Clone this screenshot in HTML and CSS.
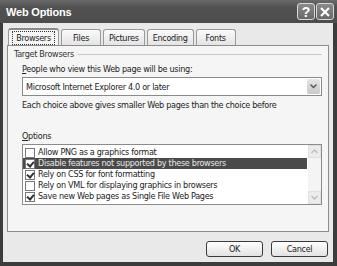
FILE: index.html
```html
<!DOCTYPE html>
<html>
<head>
    <title>Web Options</title>
    <link rel="stylesheet" href="styles.css">
</head>
<body>
    <div class="window">
        <div class="titlebar">
            <span class="title">Web Options</span>
            <div class="title-buttons">
                <span class="tbtn">?</span>
                <span class="tbtn">
                    <svg width="12" height="12" viewBox="0 0 12 12"><path d="M2 2 L10 10 M10 2 L2 10" stroke="#fff" stroke-width="2.2"/></svg>
                </span>
            </div>
        </div>

        <div class="content">
            <div class="tabs">
                <div class="tab active"><span class="focus">Browsers</span></div>
                <div class="tab">Files</div>
                <div class="tab">Pictures</div>
                <div class="tab">Encoding</div>
                <div class="tab">Fonts</div>
            </div>

            <div class="panel">
                <div class="group-title"><span>Target Browsers</span></div>
                <div class="indent">
                    <p class="label"><u>P</u>eople who view this Web page will be using:</p>
                    <div class="select">
                        <span class="select-text">Microsoft Internet Explorer 4.0 or later</span>
                        <span class="select-btn">
                            <svg width="7" height="5" viewBox="0 0 7 5"><path d="M0.5 0.5 L3.5 3.5 L6.5 0.5" fill="none" stroke="#555" stroke-width="1.4"/></svg>
                        </span>
                    </div>
                    <p class="hint">Each choice above gives smaller Web pages than the choice before</p>
                    <p class="label options-label"><u>O</u>ptions</p>
                    <div class="listbox">
                        <div class="items">
                            <div class="item"><span class="check"></span>Allow PNG as a graphics format</div>
                            <div class="item selected"><span class="check on"></span>Disable features not supported by these browsers</div>
                            <div class="item"><span class="check on"></span>Rely on CSS for font formatting</div>
                            <div class="item"><span class="check"></span>Rely on VML for displaying graphics in browsers</div>
                            <div class="item"><span class="check on"></span>Save new Web pages as Single File Web Pages</div>
                        </div>
                        <div class="scrollbar">
                            <span class="sbtn">
                                <svg width="7" height="5" viewBox="0 0 7 5"><path d="M0.5 4 L3.5 1 L6.5 4" fill="none" stroke="#bbb" stroke-width="1.3"/></svg>
                            </span>
                            <span class="sbtn">
                                <svg width="7" height="5" viewBox="0 0 7 5"><path d="M0.5 1 L3.5 4 L6.5 1" fill="none" stroke="#bbb" stroke-width="1.3"/></svg>
                            </span>
                        </div>
                    </div>
                </div>
            </div>

            <div class="buttons">
                <button>OK</button>
                <button>Cancel</button>
            </div>
        </div>
    </div>
</body>
</html>
```

FILE: styles.css
```css
* {
    margin: 0;
    padding: 0;
    box-sizing: border-box;
}

body {
    width: 337px;
    height: 266px;
    background: #2e2e2e;
    font-family: 'DejaVu Sans Condensed', 'Liberation Sans', sans-serif;
    font-size: 9px;
    letter-spacing: -0.3px;
    color: #222;
    overflow: hidden;
}

.window {
    width: 337px;
    height: 266px;
    background: #3c3c3c;
    padding: 0 4px 4px 3px;
    display: flex;
    flex-direction: column;
}

.titlebar {
    height: 23px;
    display: flex;
    align-items: center;
    justify-content: space-between;
    background: linear-gradient(#6a6a6a 0%, #525252 30%, #4c4c4c 100%);
    margin: 0 -4px 0 -3px;
    padding: 0 3px 0 6px;
}

.title {
    color: #fff;
    font-family: 'Liberation Sans', Arial, sans-serif;
    font-weight: bold;
    font-size: 11px;
    letter-spacing: -0.2px;
}

.title-buttons {
    display: flex;
    gap: 1px;
}

.tbtn {
    width: 18px;
    height: 17px;
    border: 1px solid #d8d8d8;
    border-radius: 3px;
    background: linear-gradient(#8a8a8a, #686868);
    color: #fff;
    font-family: 'Liberation Sans', Arial, sans-serif;
    font-weight: bold;
    font-size: 14px;
    display: flex;
    align-items: center;
    justify-content: center;
}

.content {
    flex: 1;
    background: #e9e9e9;
    padding: 4px 4px 0 4px;
    display: flex;
    flex-direction: column;
}

.tabs {
    display: flex;
    gap: 2px;
    padding-left: 1px;
    height: 18px;
    align-items: flex-end;
}

.tab {
    height: 16px;
    min-width: 40px;
    padding: 0 5px;
    border: 1px solid #9a9a9a;
    border-bottom: none;
    border-radius: 3px 3px 0 0;
    background: linear-gradient(#fafafa, #e4e4e4);
    display: flex;
    align-items: center;
    justify-content: center;
    color: #222;
}

.tab.active {
    height: 18px;
    width: 51px;
    padding: 0;
    background: #f6f6f6;
    margin-bottom: -1px;
    border-top: 2px solid #8a8a8a;
}

.focus {
    border: 1px dotted #333;
    padding: 1px 3px;
}

.panel {
    height: 187px;
    border: 1px solid #8c8c8c;
    background: #f5f5f5;
    padding: 3px 6px 0 6px;
}

.group-title {
    display: flex;
    align-items: center;
    gap: 4px;
    color: #333;
}

.group-title::after {
    content: "";
    flex: 1;
    border-top: 1px solid #c8c8c8;
}

.indent {
    padding-left: 8px;
}

.label {
    margin-top: 4px;
    line-height: 12px;
}

.select {
    margin-top: 2px;
    height: 19px;
    border: 1px solid #8a8a8a;
    background: #fff;
    display: flex;
    align-items: center;
    justify-content: space-between;
    padding: 1px 1px 1px 3px;
}

.select-btn {
    width: 13px;
    height: 15px;
    background: linear-gradient(#e6e6e6, #c8c8c8);
    border-radius: 2px;
    display: flex;
    align-items: center;
    justify-content: center;
}

.hint {
    margin-top: 3px;
    line-height: 12px;
}

.options-label {
    margin-top: 19px;
}

.listbox {
    margin-top: 2px;
    height: 61px;
    border: 1px solid #8a8a8a;
    background: #fff;
    display: flex;
}

.items {
    flex: 1;
    padding-top: 2px;
}

.item {
    height: 11px;
    display: flex;
    align-items: center;
    gap: 3px;
    padding-left: 2px;
    line-height: 11px;
    margin-right: 1px;
}

.item.selected {
    background: #4a4a4a;
    color: #e8e8e8;
}

.check {
    width: 10px;
    height: 10px;
    border: 1px solid #7a7a7a;
    background: #fff;
    position: relative;
}

.check.on::after {
    content: "";
    position: absolute;
    left: 2px;
    top: 0px;
    width: 3px;
    height: 5px;
    border: solid #333;
    border-width: 0 2px 2px 0;
    transform: rotate(40deg);
}

.scrollbar {
    width: 13px;
    background: #f4f4f4;
    display: flex;
    flex-direction: column;
    justify-content: space-between;
}

.sbtn {
    height: 13px;
    background: #ececec;
    border: 1px solid #e0e0e0;
    display: flex;
    align-items: center;
    justify-content: center;
}

.buttons {
    display: flex;
    justify-content: flex-end;
    gap: 8px;
    padding: 9px 1px 0 0;
}

button {
    width: 57px;
    height: 16px;
    border: 1px solid #3a3a3a;
    border-radius: 3px;
    background: linear-gradient(#ffffff, #e2e2e2);
    font-family: 'DejaVu Sans Condensed', 'Liberation Sans', sans-serif;
    font-size: 9px;
    letter-spacing: -0.3px;
    color: #222;
}
```
